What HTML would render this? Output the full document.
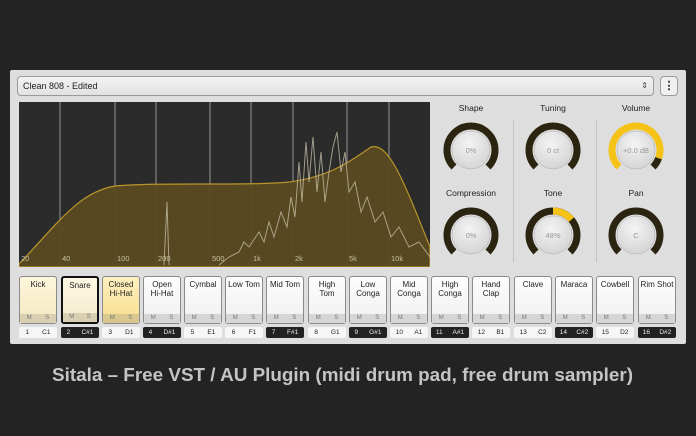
<!DOCTYPE html>
<html><head><meta charset="utf-8"><style>
*{margin:0;padding:0;box-sizing:border-box}
body{width:696px;height:436px;background:#232323;position:relative;overflow:hidden;font-family:"Liberation Sans",sans-serif}
.panel{position:absolute;left:10px;top:70px;width:676px;height:274px;background:#dedede;border-radius:2px}
.dd{position:absolute;left:17px;top:76px;width:637px;height:20px;border:1px solid #9a9a9a;border-radius:4px;background:linear-gradient(#f4f4f4,#e2e2e2);font-size:9px;line-height:18px;padding-left:5px;color:#222}
.dd .ar{position:absolute;right:5px;top:0;font-size:8px;color:#444}
.mb{position:absolute;left:660px;top:76px;width:18px;height:20px;border:1px solid #9a9a9a;border-radius:4px;background:#f0f0f0;font-size:11px;font-weight:bold;text-align:center;line-height:18px;color:#222}
.lbl{position:absolute;font-size:8.5px;color:#222;text-align:center;width:80px}
.sep{position:absolute;width:1px;background:#c4c4c4;top:120px;height:142px}
.pad{position:absolute;top:276px;width:38px;height:48px;border:1px solid #8a8a8a;border-radius:3px;background:linear-gradient(#fdfdfd,#f0f0f0);font-size:8px;line-height:9px;text-align:center;color:#222;padding-top:3px}
.pad .ms{position:absolute;left:0;right:0;bottom:0;height:9px;background:#d6d6d6;font-size:6px;line-height:9px;color:#777;display:flex;justify-content:space-around}
.num{position:absolute;top:327px;width:38px;height:11px;border-radius:2px;background:#f6f6f6;font-size:6.5px;line-height:11px;color:#222;display:flex;justify-content:space-around}
.num.k{background:#222;color:#eee}
</style></head><body>
<div class="panel"></div>
<div class="dd">Clean 808 - Edited<span class="ar">&#8661;</span></div>
<div class="mb">&#8942;</div>

<svg style="position:absolute;left:19px;top:102px" width="411" height="165" viewBox="0 0 411 165">
<rect width="411" height="165" fill="#2b2b2c"/>
<g stroke="#b0b0a8" stroke-width="1" opacity=".8">
<line x1="41" y1="0" x2="41" y2="165"/><line x1="96" y1="0" x2="96" y2="165"/><line x1="137" y1="0" x2="137" y2="165"/><line x1="191" y1="0" x2="191" y2="165"/><line x1="232" y1="0" x2="232" y2="165"/><line x1="274" y1="0" x2="274" y2="165"/><line x1="328" y1="0" x2="328" y2="165"/><line x1="370" y1="0" x2="370" y2="165"/>
</g>
<path d="M0 162 C40 120 60 90 96 84 C140 80 230 84 270 80 C310 75 330 60 352 45 C370 40 385 80 411 145 L411 165 L0 165 Z" fill="#5a4a22" fill-opacity=".95" stroke="#b8952a" stroke-width="1.2"/>
<path d="M145 163 L148 100 L150 163 M200 163 L210 155 L220 150 L225 140 L230 145 L240 130 L245 140 L250 120 L255 135 L262 110 L268 125 L272 95 L276 115 L280 60 L283 100 L287 40 L290 80 L294 35 L298 90 L302 50 L306 100 L310 70 L314 45 L318 30 L322 70 L326 50 L330 90 L336 80 L342 110 L348 95 L356 120 L364 110 L372 135 L380 125 L390 145 L400 140 L411 155" fill="none" stroke="#c9c2a8" stroke-width="1" opacity=".75"/>
<g font-size="7.5" fill="#c8c0a0" font-family="Liberation Sans">
<text x="2" y="159">20</text><text x="43" y="159">40</text><text x="98" y="159">100</text><text x="139" y="159">200</text><text x="193" y="159">500</text><text x="234" y="159">1k</text><text x="276" y="159">2k</text><text x="330" y="159">5k</text><text x="372" y="159">10k</text>
</g>
</svg>

<div class="lbl" style="left:431px;top:103px">Shape</div>
<div class="lbl" style="left:513px;top:103px">Tuning</div>
<div class="lbl" style="left:596px;top:103px">Volume</div>
<div class="lbl" style="left:431px;top:188px">Compression</div>
<div class="lbl" style="left:513px;top:188px">Tone</div>
<div class="lbl" style="left:596px;top:188px">Pan</div>
<div class="sep" style="left:513px"></div>
<div class="sep" style="left:596px"></div>

<svg style="position:absolute;left:0;top:0" width="696" height="436">
<defs><radialGradient id="kg" cx=".45" cy=".35" r=".7"><stop offset="0" stop-color="#f4f4f4"/><stop offset="1" stop-color="#d2d2d2"/></radialGradient></defs>
<g font-size="7.5" fill="#999" text-anchor="middle" font-family="Liberation Sans">
<g transform="translate(471,150)"><path d="M-17 17 A24 24 0 1 1 17 17" fill="none" stroke="#2a2410" stroke-width="7"/><circle r="19" fill="url(#kg)" stroke="#aaa" stroke-width=".5"/><text y="3">0%</text></g>
<g transform="translate(553,150)"><path d="M-17 17 A24 24 0 1 1 17 17" fill="none" stroke="#2a2410" stroke-width="7"/><circle r="19" fill="url(#kg)" stroke="#aaa" stroke-width=".5"/><text y="3">0 ct</text></g>
<g transform="translate(636,150)"><path d="M-17 17 A24 24 0 1 1 22.6 8.2" fill="none" stroke="#f5c218" stroke-width="7"/><path d="M22.6 8.2 A24 24 0 0 1 17 17" fill="none" stroke="#2a2410" stroke-width="7"/><circle r="19" fill="url(#kg)" stroke="#aaa" stroke-width=".5"/><text y="3">+0.0 dB</text></g>
<g transform="translate(471,235)"><path d="M-17 17 A24 24 0 1 1 17 17" fill="none" stroke="#2a2410" stroke-width="7"/><circle r="19" fill="url(#kg)" stroke="#aaa" stroke-width=".5"/><text y="3">0%</text></g>
<g transform="translate(553,235)"><path d="M-17 17 A24 24 0 1 1 17 17" fill="none" stroke="#2a2410" stroke-width="7"/><path d="M0 -24 A24 24 0 0 1 18.4 -15.4" fill="none" stroke="#f5c218" stroke-width="7"/><circle r="19" fill="url(#kg)" stroke="#aaa" stroke-width=".5"/><text y="3">48%</text></g>
<g transform="translate(636,235)"><path d="M-17 17 A24 24 0 1 1 17 17" fill="none" stroke="#2a2410" stroke-width="7"/><circle r="19" fill="url(#kg)" stroke="#aaa" stroke-width=".5"/><text y="3">C</text></g>
</g>
<text x="52" y="381" textLength="581" lengthAdjust="spacingAndGlyphs" font-family="Liberation Sans" font-weight="bold" font-size="18" fill="#c4c4c4">Sitala – Free VST / AU Plugin (midi drum pad, free drum sampler)</text>
</svg>

<div class="pad" style="left:19px;background:linear-gradient(#fdf6dc,#f3e8c0)">Kick<div class="ms" style="background:#d8d0b0"><span>M</span><span>S</span></div></div>
<div class="pad" style="left:61px;border:2px solid #111;background:linear-gradient(#fdf8e4,#f3ebcc)">Snare<div class="ms" style="background:#d8d0b0"><span>M</span><span>S</span></div></div>
<div class="pad" style="left:102px;background:linear-gradient(#fdf0c0,#f7dc8c)">Closed<br>Hi-Hat<div class="ms" style="background:#d8c890"><span>M</span><span>S</span></div></div>
<div class="pad" style="left:143px">Open<br>Hi-Hat<div class="ms"><span>M</span><span>S</span></div></div>
<div class="pad" style="left:184px">Cymbal<div class="ms"><span>M</span><span>S</span></div></div>
<div class="pad" style="left:225px">Low Tom<div class="ms"><span>M</span><span>S</span></div></div>
<div class="pad" style="left:266px">Mid Tom<div class="ms"><span>M</span><span>S</span></div></div>
<div class="pad" style="left:308px">High<br>Tom<div class="ms"><span>M</span><span>S</span></div></div>
<div class="pad" style="left:349px">Low<br>Conga<div class="ms"><span>M</span><span>S</span></div></div>
<div class="pad" style="left:390px">Mid<br>Conga<div class="ms"><span>M</span><span>S</span></div></div>
<div class="pad" style="left:431px">High<br>Conga<div class="ms"><span>M</span><span>S</span></div></div>
<div class="pad" style="left:472px">Hand<br>Clap<div class="ms"><span>M</span><span>S</span></div></div>
<div class="pad" style="left:514px">Clave<div class="ms"><span>M</span><span>S</span></div></div>
<div class="pad" style="left:555px">Maraca<div class="ms"><span>M</span><span>S</span></div></div>
<div class="pad" style="left:596px">Cowbell<div class="ms"><span>M</span><span>S</span></div></div>
<div class="pad" style="left:638px">Rim Shot<div class="ms"><span>M</span><span>S</span></div></div>

<div class="num" style="left:19px"><span>1</span><span>C1</span></div>
<div class="num k" style="left:61px"><span>2</span><span>C#1</span></div>
<div class="num" style="left:102px"><span>3</span><span>D1</span></div>
<div class="num k" style="left:143px"><span>4</span><span>D#1</span></div>
<div class="num" style="left:184px"><span>5</span><span>E1</span></div>
<div class="num" style="left:225px"><span>6</span><span>F1</span></div>
<div class="num k" style="left:266px"><span>7</span><span>F#1</span></div>
<div class="num" style="left:308px"><span>8</span><span>G1</span></div>
<div class="num k" style="left:349px"><span>9</span><span>G#1</span></div>
<div class="num" style="left:390px"><span>10</span><span>A1</span></div>
<div class="num k" style="left:431px"><span>11</span><span>A#1</span></div>
<div class="num" style="left:472px"><span>12</span><span>B1</span></div>
<div class="num" style="left:514px"><span>13</span><span>C2</span></div>
<div class="num k" style="left:555px"><span>14</span><span>C#2</span></div>
<div class="num" style="left:596px"><span>15</span><span>D2</span></div>
<div class="num k" style="left:638px"><span>16</span><span>D#2</span></div>
</body></html>
